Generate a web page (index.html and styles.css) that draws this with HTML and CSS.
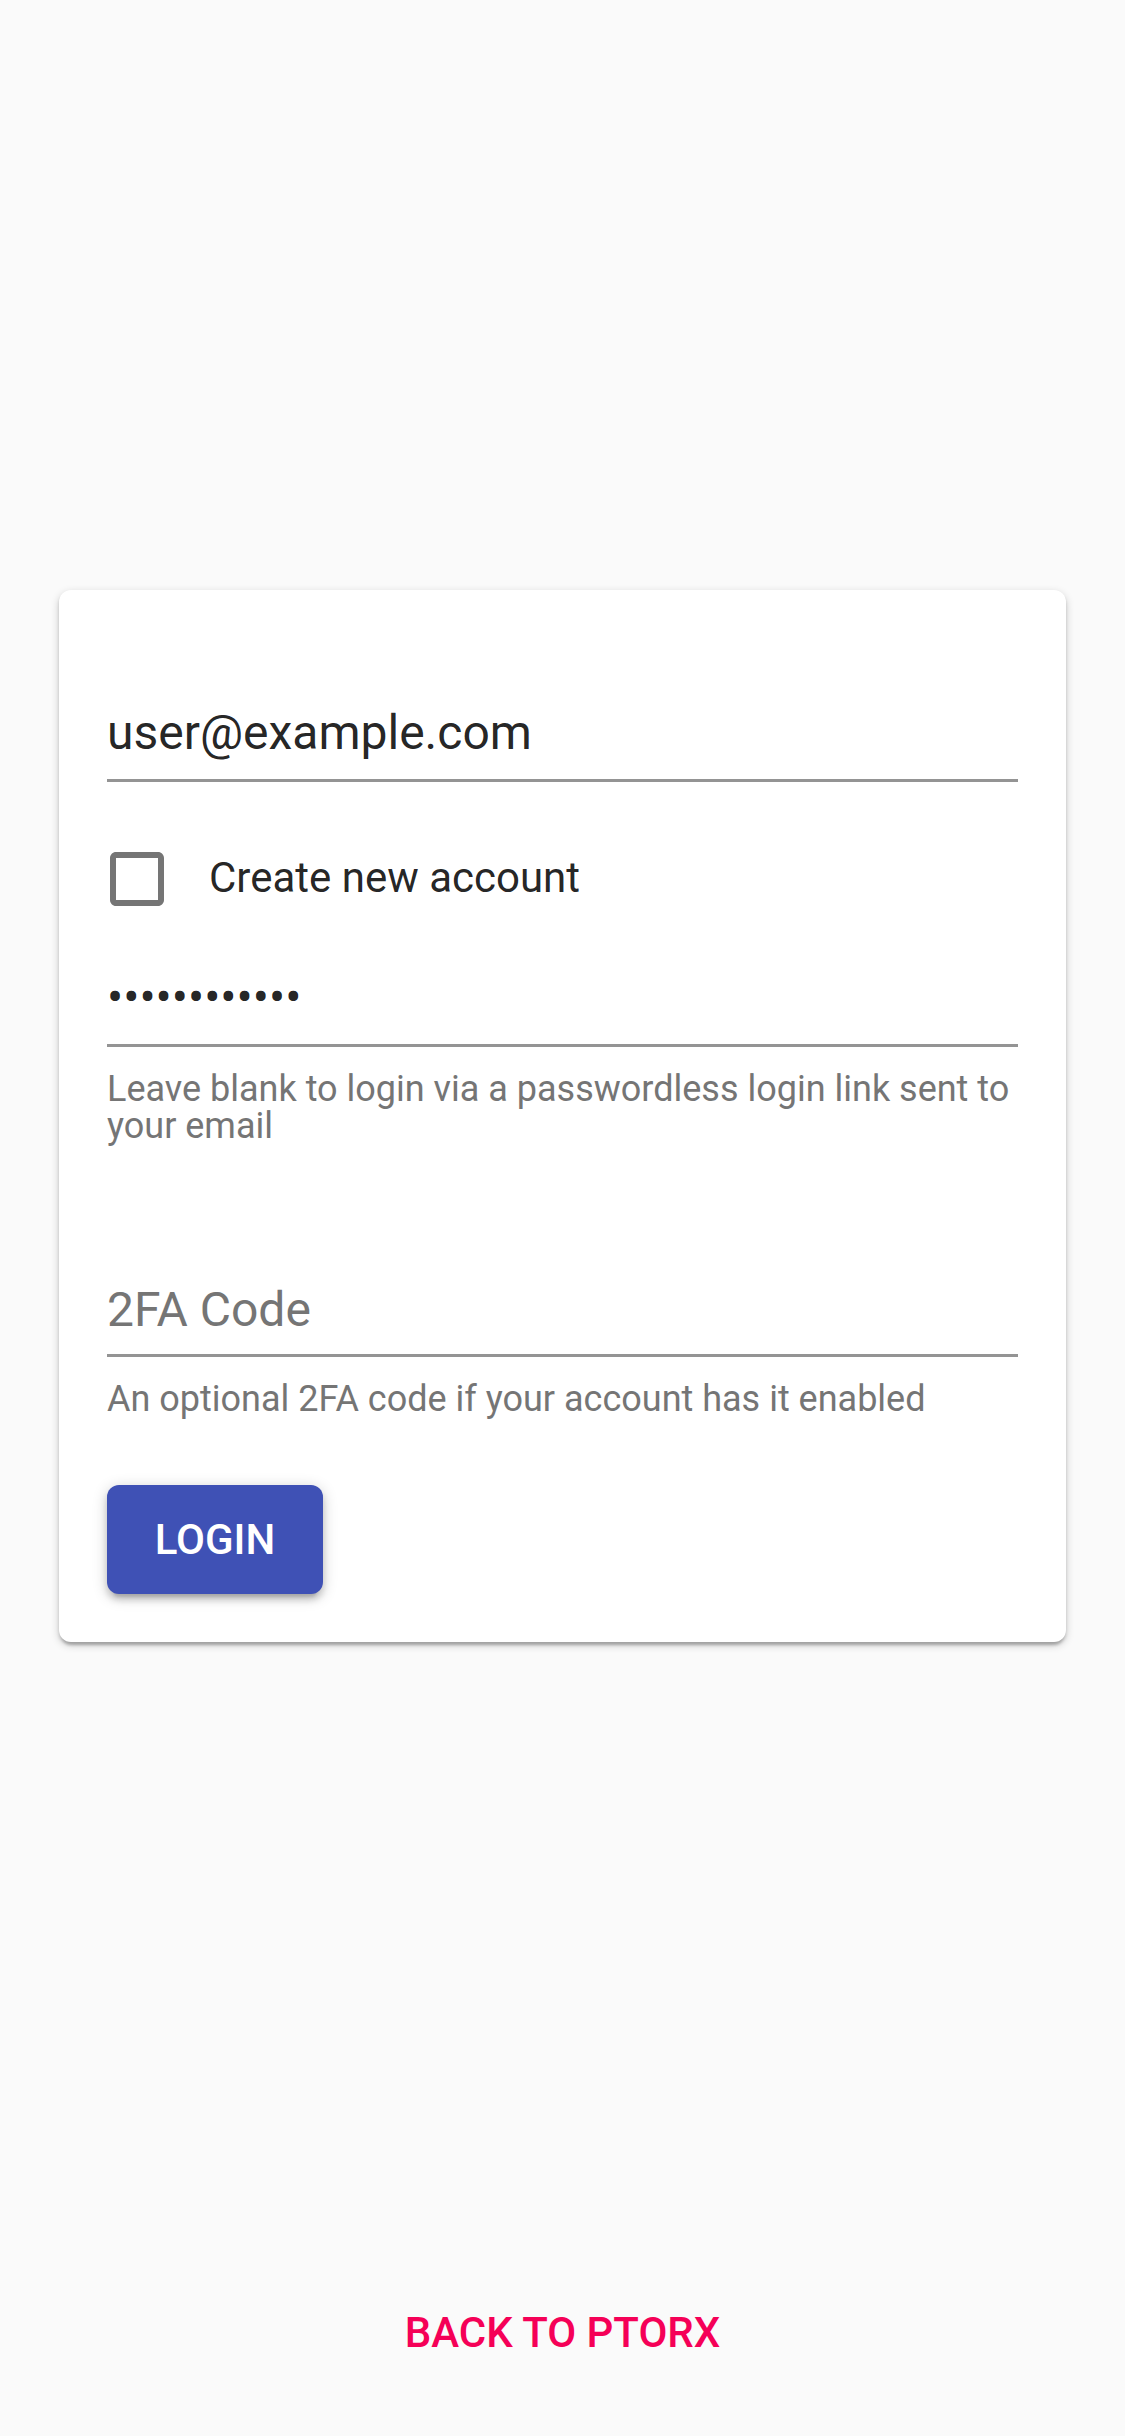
FILE: index.html
```html
<!DOCTYPE html>
<html lang="en">
<head>
<meta charset="utf-8">
<title>Login</title>
<link rel="stylesheet" href="styles.css">
</head>
<body>
<div class="page">
  <main class="card">
    <div class="field field-email">
      <div class="input">user@example.com</div>
    </div>
    <label class="check-row">
      <span class="check-box">
        <svg viewBox="0 0 24 24" width="72" height="72"><path fill="#757575" d="M19 5v14H5V5h14m0-2H5c-1.1 0-2 .9-2 2v14c0 1.1.9 2 2 2h14c1.1 0 2-.9 2-2V5c0-1.1-.9-2-2-2z"/></svg>
      </span>
      <span class="check-label">Create new account</span>
    </label>
    <div class="field field-pass">
      <div class="input dots">••••••••••••</div>
      <p class="helper">Leave blank to login via a passwordless login link sent to your email</p>
    </div>
    <div class="field field-code">
      <div class="input placeholder">2FA Code</div>
      <p class="helper">An optional 2FA code if your account has it enabled</p>
    </div>
    <button class="login-btn" type="button">Login</button>
  </main>
  <a class="back-link" href="#">Back to Ptorx</a>
</div>
</body>
</html>
```

FILE: styles.css
```css
* { box-sizing: border-box; }
html, body {
  margin: 0;
  padding: 0;
  background: #fafafa;
  font-family: Roboto, "Noto Sans", "Liberation Sans", sans-serif;
}
.page {
  min-height: 2436px;
  display: flex;
  flex-direction: column;
  padding: 590px 59px 0;
}
.card {
  background: #fff;
  border-radius: 12px;
  box-shadow: 0 3px 9px 0 rgba(0,0,0,0.2), 0 3px 3px 0 rgba(0,0,0,0.14), 0 6px 3px -3px rgba(0,0,0,0.12);
  padding: 48px 48px 48px;
  display: flex;
  flex-direction: column;
  align-items: flex-start;
}
.field { width: 100%; }
.input {
  font-size: 48px;
  line-height: 57px;
  color: rgba(0,0,0,0.87);
  padding: 18px 0 18px;
  border-bottom: 3px solid #949494;
  white-space: nowrap;
}
.field-email { margin-top: 48px; }
.dots {
  letter-spacing: 0;
  font-family: Roboto, sans-serif;
}
.placeholder { color: #757575; }
.check-row {
  display: flex;
  align-items: center;
  margin: 25px 0 0 -42px;
  height: 144px;
  cursor: pointer;
}
.check-box {
  width: 144px;
  height: 144px;
  display: flex;
  align-items: center;
  justify-content: center;
}
.check-box svg { display: block; }
.check-label {
  font-size: 42px;
  line-height: 57px;
  color: rgba(0,0,0,0.87);
  position: relative;
  top: -2px;
}
.helper {
  margin: 24px 0 0;
  font-size: 36px;
  line-height: 37px;
  color: #757575;
}
.field-code { margin-top: 116px; }
.field-code .input { padding-top: 20px; padding-bottom: 16px; }
.field-code .helper { margin-top: 24px; }
.login-btn {
  margin-top: 67px;
  width: 216px;
  height: 109px;
  border: 0;
  border-radius: 12px;
  background: #3f51b5;
  color: #fff;
  font-family: Roboto, sans-serif;
  font-size: 42px;
  font-weight: 500;
  text-transform: uppercase;
  box-shadow: 0 3px 15px 0 rgba(0,0,0,0.2), 0 6px 6px 0 rgba(0,0,0,0.14), 0 9px 3px -6px rgba(0,0,0,0.12);
  padding: 0;
}
.back-link {
  margin-top: auto;
  margin-bottom: 50px;
  align-self: center;
  height: 108px;
  display: flex;
  align-items: center;
  padding: 0 48px;
  color: #f50057;
  font-size: 42px;
  font-weight: 500;
  text-transform: uppercase;
  text-decoration: none;
}
```
